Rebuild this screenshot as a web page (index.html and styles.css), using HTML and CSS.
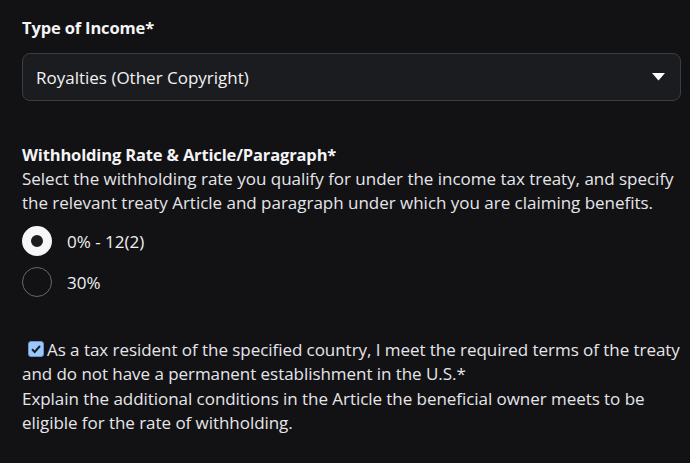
FILE: index.html
```html
<!DOCTYPE html>
<html lang="en">
<head>
<meta charset="utf-8">
<link rel="stylesheet" href="styles.css">
</head>
<body>
<main class="form">
  <section class="field">
    <div class="label">Type of Income*</div>
    <div class="select">
      <span class="select-value">Royalties (Other Copyright)</span>
      <svg class="caret" width="13" height="8" viewBox="0 0 13 8"><path d="M0 0H13L6.5 7.5Z" fill="#fff"/></svg>
    </div>
  </section>
  <section class="field rate">
    <div class="label">Withholding Rate &amp; Article/Paragraph*</div>
    <p class="desc">Select the withholding rate you qualify for under the income tax treaty, and specify the relevant treaty Article and paragraph under which you are claiming benefits.</p>
    <div class="radios">
      <div class="radio-row"><span class="radio checked"></span><span class="radio-label">0% - 12(2)</span></div>
      <div class="radio-row"><span class="radio"></span><span class="radio-label">30%</span></div>
    </div>
  </section>
  <section class="field confirm">
    <p class="desc long"><span class="checkbox"><svg width="16" height="16" viewBox="0 0 16 16"><rect x="0.5" y="0.5" width="15" height="15" rx="2.5" fill="#99c8ff" stroke="#6f95c4"/><path d="M4 8.3L6.7 11L12 5" fill="none" stroke="#1b1c20" stroke-width="2"/></svg></span>As a tax resident of the specified country, I meet the required terms of the treaty and do not have a permanent establishment in the U.S.*<br>Explain the additional conditions in the Article the beneficial owner meets to be eligible for the rate of withholding.</p>
  </section>
</main>
</body>
</html>
```
FILE: styles.css
```css
html, body {
  margin: 0;
  padding: 0;
  background: #121214;
}
body {
  font-family: "Open Sans", "Noto Sans", sans-serif;
  color: #e8e8ec;
}
.form {
  padding: 16px 0 0 22px;
}
.label {
  font-weight: 700;
  font-size: 16.5px;
  letter-spacing: -0.15px;
  line-height: 24px;
  color: #f4f4f6;
}
.select {
  margin: 13px 9px 0 0;
  height: 48px;
  box-sizing: border-box;
  border: 1px solid #3c3d43;
  border-radius: 8px;
  background: #1b1c20;
  display: flex;
  align-items: center;
  justify-content: space-between;
  padding: 0 15px 0 13px;
}
.select-value {
  font-size: 17px;
  color: #f2f2f4;
}
.caret {
  display: block;
}
.rate {
  margin-top: 42px;
  padding-right: 9px;
}
.desc {
  margin: 0;
  font-size: 17px;
  letter-spacing: -0.02px;
  line-height: 24px;
  color: #e6e6ea;
}
.desc.long {
  line-height: 24.4px;
  letter-spacing: -0.05px;
}
.radios {
  margin-top: 11px;
  display: flex;
  flex-direction: column;
  gap: 11px;
}
.radio-row {
  display: flex;
  align-items: center;
  gap: 15px;
}
.radio {
  width: 30px;
  height: 30px;
  box-sizing: border-box;
  border-radius: 50%;
  border: 1.5px solid #646772;
}
.radio.checked {
  border: 9.5px solid #f6f6f8;
  background: #1b1c20;
}
.radio-label {
  font-size: 17px;
  color: #f0f0f2;
}
.confirm {
  margin-top: 41px;
}
.checkbox {
  display: inline-block;
  vertical-align: -1px;
  margin: 0 3px 0 6px;
  line-height: 0;
}
```
